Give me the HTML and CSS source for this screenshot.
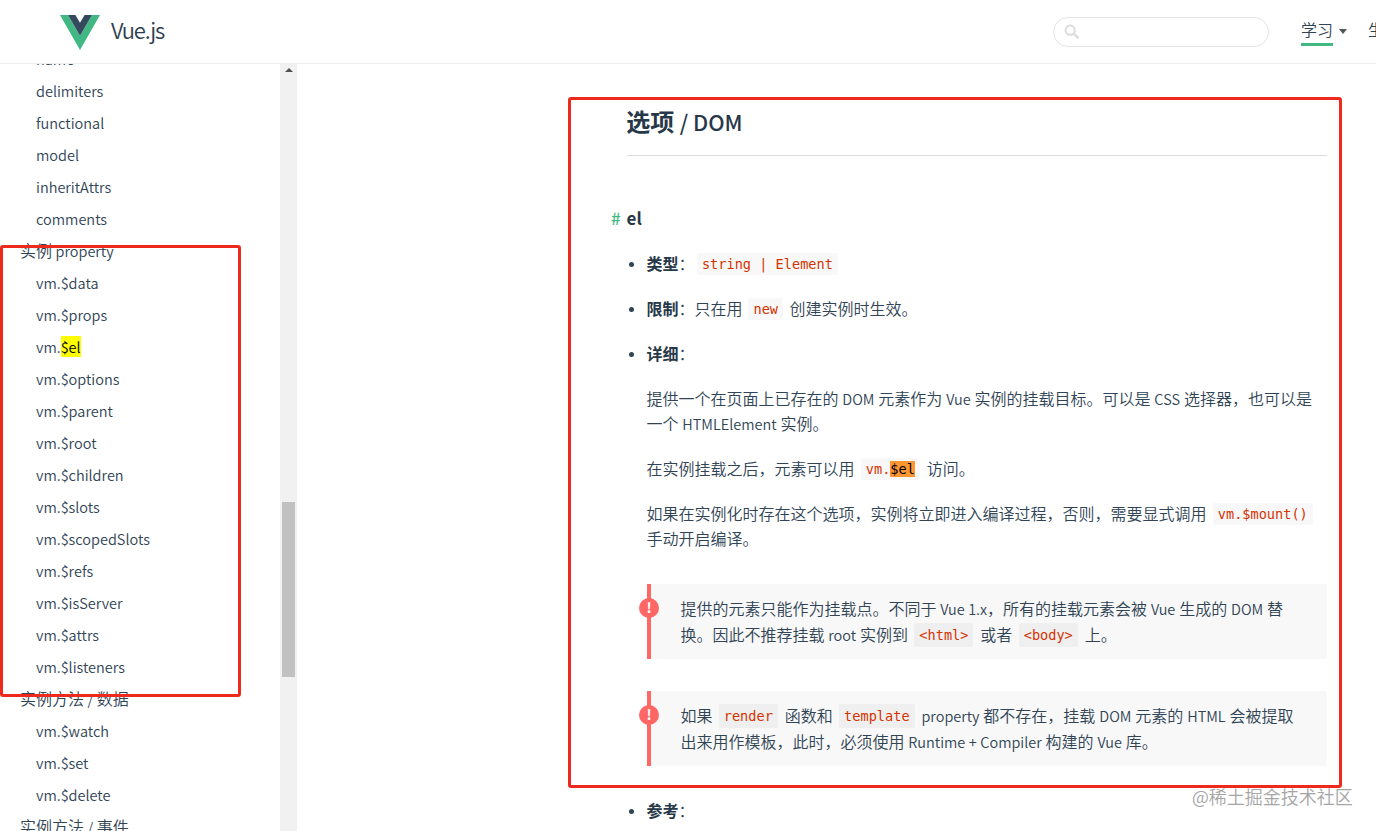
FILE: index.html
```html
<!DOCTYPE html>
<html lang="zh-CN">
<head>
  <meta charset="UTF-8" />
  <meta name="viewport" content="width=device-width, initial-scale=1.0" />
  <title>API — Vue.js</title>
  <link rel="stylesheet" href="styles.css">
</head>
<body>
  <header class="header">
    <a class="logo">
      <svg width="40" height="35" viewBox="0 0 40 35">
        <path fill="#41b883" d="M0 0h8l12 20.7L32 0h8L20 35z"/>
        <path fill="#35495e" d="M8 0h7.4L20 7.8 24.6 0H32L20 20.7z"/>
      </svg>
      <span>Vue.js</span>
    </a>
    <nav class="nav">
      <div class="search">
        <svg width="16" height="16" viewBox="0 0 16 16" fill="none" stroke="#dcdcdc">
          <circle cx="6.2" cy="6.2" r="4.6" stroke-width="2"/>
          <path stroke-width="2.4" d="M9.6 9.6l5 4.8"/>
        </svg>
      </div>
      <a class="nav-link current">学习</a>
      <i class="arrow"></i>
      <a class="nav-link">生态系统</a>
    </nav>
  </header>

  <div class="page">
    <aside class="sidebar">
      <ul class="menu">
        <li>name</li>
        <li>delimiters</li>
        <li>functional</li>
        <li>model</li>
        <li>inheritAttrs</li>
        <li>comments</li>
        <li class="group">实例 <span class="en">property</span></li>
        <li>vm.$data</li>
        <li>vm.$props</li>
        <li>vm.<mark>$el</mark></li>
        <li>vm.$options</li>
        <li>vm.$parent</li>
        <li>vm.$root</li>
        <li>vm.$children</li>
        <li>vm.$slots</li>
        <li>vm.$scopedSlots</li>
        <li>vm.$refs</li>
        <li>vm.$isServer</li>
        <li>vm.$attrs</li>
        <li>vm.$listeners</li>
        <li class="group">实例方法 <span class="en">/</span> 数据</li>
        <li>vm.$watch</li>
        <li>vm.$set</li>
        <li>vm.$delete</li>
        <li class="group">实例方法 <span class="en">/</span> 事件</li>
      </ul>
      <div class="scrollbar">
        <i class="scroll-up"></i>
        <div class="scroll-thumb"></div>
      </div>
    </aside>

    <main class="content">
      <h2>选项 <span class="en">/ DOM</span></h2>
      <h3><a class="hash">#</a>el</h3>
      <ul class="api">
        <li><strong>类型</strong>：<code>string | Element</code></li>
        <li><strong>限制</strong>：只在用 <code>new</code> 创建实例时生效。</li>
        <li>
          <strong>详细</strong>：
          <p>提供一个在页面上已存在的 <span class="en">DOM</span> 元素作为 <span class="en">Vue</span> 实例的挂载目标。可以是 <span class="en">CSS</span> 选择器，也可以是一个 <span class="en">HTMLElement</span> 实例。</p>
          <p>在实例挂载之后，元素可以用 <code>vm.<mark class="on">$el</mark></code> 访问。</p>
          <p>如果在实例化时存在这个选项，实例将立即进入编译过程，否则，需要显式调用 <code>vm.$mount()</code> 手动开启编译。</p>
          <p class="tip">提供的元素只能作为挂载点。不同于 <span class="en">Vue 1.x</span>，所有的挂载元素会被 <span class="en">Vue</span> 生成的 <span class="en">DOM</span> 替换。因此不推荐挂载 <span class="en">root</span> 实例到 <code>&lt;html&gt;</code> 或者 <code>&lt;body&gt;</code> 上。</p>
          <p class="tip">如果 <code>render</code> 函数和 <code>template</code> <span class="en">property</span> 都不存在，挂载 <span class="en">DOM</span> 元素的 <span class="en">HTML</span> 会被提取出来用作模板，此时，必须使用 <span class="en">Runtime + Compiler</span> 构建的 <span class="en">Vue</span> 库。</p>
        </li>
        <li><strong>参考</strong>：</li>
      </ul>
    </main>
  </div>

  <!-- annotation frames -->
  <div class="frame frame-menu"></div>
  <div class="frame frame-doc"></div>
  <div class="watermark">@稀土掘金技术社区</div>
</body>
</html>
```
FILE: styles.css
```css
*,*::before,*::after{box-sizing:border-box;margin:0;padding:0}
html,body{height:100%;overflow:hidden;background:#fff}
body{
  display:flex;flex-direction:column;
  font-family:"Noto Sans CJK SC",sans-serif;
  font-size:16px;line-height:1.6;font-weight:350;color:#304455;
}
ul{list-style:none}
/* latin text runs a little smaller than the CJK around it */
.en{font-size:.905em;line-height:1}

/* header */
.header{
  position:relative;z-index:2;flex:none;
  display:flex;justify-content:space-between;
  height:64px;padding-left:60px;
  background:#fff;border-bottom:1px solid #f0f0f0;
}
.logo{display:flex;align-items:center;gap:11px;height:64px;font-size:22px;color:#2c3e50}
.logo span{line-height:32px;margin-top:-6px;letter-spacing:-1.1px}
.nav{display:flex;align-items:center;width:323px;height:63px;overflow:hidden;white-space:nowrap}
.search{
  flex:none;display:flex;align-items:center;
  width:216px;height:30px;padding-left:10px;margin-right:32px;
  border:1px solid #e3e3e3;border-radius:15px;
}
.nav-link{flex:none;height:31px;margin-top:-2px;line-height:28px;border-bottom:3px solid transparent}
.nav-link.current{border-color:#42b983}
.arrow{
  flex:none;margin:0 21px 0 6px;
  border:4px solid transparent;border-top:5px solid #4f5959;border-bottom:0;
}

/* layout */
.page{flex:1;display:flex;min-height:0}
.sidebar{flex:none;display:flex;width:297px;overflow:hidden}
.content{width:1030px;padding:36px 0 0 330px}

/* sidebar menu */
.menu{flex:1;margin-top:-21px;padding-left:20px}
.menu li{height:32px;line-height:32px;padding-left:16px;font-size:14.5px;white-space:nowrap}
.menu .group{padding-left:0;font-size:16px;line-height:30px}
mark{background:#ff0;color:#000}
mark.on{background:#ff9632}
.scrollbar{width:17px;background:#f1f1f1}
.scroll-up{
  display:block;width:8px;margin:4px auto 0;
  border:4px solid transparent;border-bottom-color:#505050;border-top:0;
}
.scroll-thumb{width:13px;height:175px;margin:430px auto 0;background:#c1c1c1}

/* content */
h2{
  height:56px;line-height:42px;text-indent:-.8px;
  font-size:24px;color:#273849;border-bottom:1px solid #ddd;
}
h2 .en{font-weight:500}
h3{
  display:flex;margin:48px 0 20.4px -16px;
  font-size:17px;line-height:27px;font-weight:600;color:#273849;
}
.hash{width:15.5px;font-weight:500;color:#42b983}
.api{padding-left:19.4px}
.api > li{list-style:disc;margin-bottom:19.2px}
.api > li::marker{font-size:13px}
.api p{margin-top:19.2px;word-spacing:.3px}
strong{font-weight:600;color:#273849}
code{
  padding:3px 5px;margin:0 3px 0 2.5px;
  font-family:"DejaVu Sans Mono",monospace;
  font-size:13.6px;line-height:1;white-space:nowrap;vertical-align:1px;word-spacing:0;
  color:#d63200;background:#f8f8f8;border-radius:2px;
}
.api .tip{
  position:relative;margin:32px 0 32px .6px;padding:12px 24px 12px 29.4px;
  background:#f8f8f8;border-left:4px solid #f66;border-radius:0 2px 2px 0;
}
.tip::before{
  content:"!";position:absolute;top:14px;left:-12px;
  width:20px;height:20px;border-radius:50%;
  background:#f66;color:#fff;text-align:center;
  font-size:14px;line-height:19px;font-weight:700;
}
.tip code{padding:4px 5px;background:#efefef}

/* overlays */
.frame{position:absolute;z-index:3;border:3px solid #ee2a1e;border-radius:3px}
.frame-menu{left:0;top:245px;width:241px;height:452px}
.frame-doc{left:568px;top:97px;width:774px;height:691px}
.watermark{
  position:absolute;z-index:3;left:1192px;top:782px;
  font-size:18px;line-height:28px;color:#a5a5a5;white-space:nowrap;
}
```
